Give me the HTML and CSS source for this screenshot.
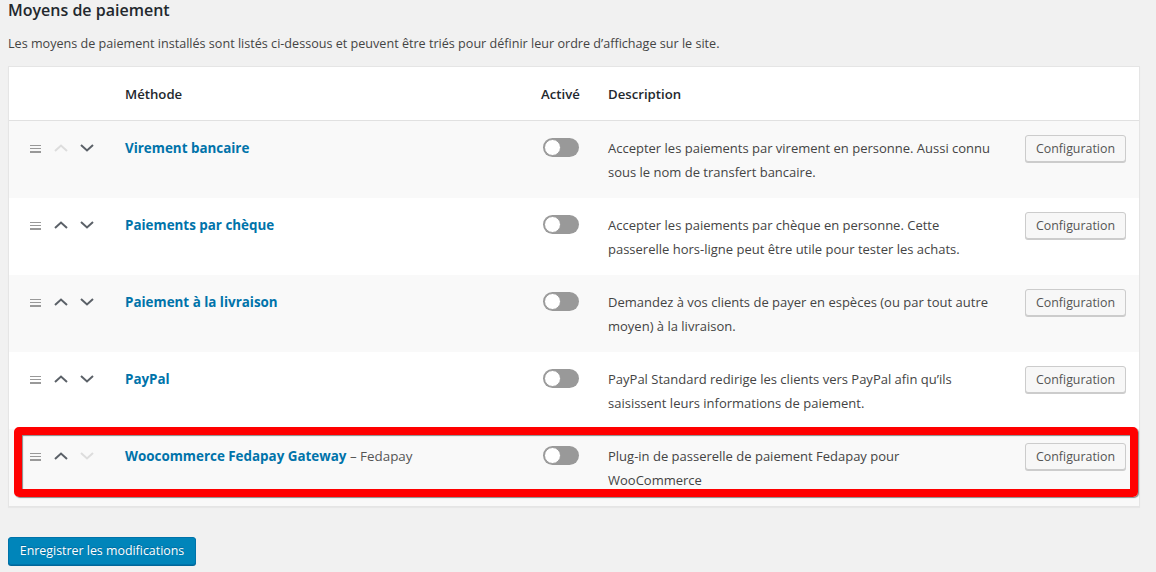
FILE: index.html
```html
<!DOCTYPE html>
<html lang="fr">
<head>
<meta charset="utf-8">
<title>Moyens de paiement</title>
<link rel="stylesheet" href="styles.css">
</head>
<body>
<div class="wrap">
  <h2 class="title">Moyens de paiement</h2>
  <p class="intro">Les moyens de paiement installés sont listés ci-dessous et peuvent être triés pour définir leur ordre d’affichage sur le site.</p>

  <div class="table-box">
    <table class="gateways">
      <colgroup>
        <col class="c-sort"><col class="c-name"><col class="c-status"><col class="c-desc"><col class="c-action">
      </colgroup>
      <thead>
        <tr>
          <th></th>
          <th>Méthode</th>
          <th>Activé</th>
          <th>Description</th>
          <th></th>
        </tr>
      </thead>
      <tbody>
        <tr class="alt">
          <td class="sort">
            <span class="handle"><i></i><i></i><i></i></span>
            <svg class="chev off" viewBox="0 0 16 10"><polyline points="2,8 8,2.5 14,8"/></svg>
            <svg class="chev" viewBox="0 0 16 10"><polyline points="2,2 8,7.5 14,2"/></svg>
          </td>
          <td class="name"><a href="#">Virement bancaire</a></td>
          <td class="status"><span class="toggle"><span class="knob"></span></span></td>
          <td class="desc">Accepter les paiements par virement en personne. Aussi connu sous le nom de transfert bancaire.</td>
          <td class="action"><button class="btn">Configuration</button></td>
        </tr>
        <tr>
          <td class="sort">
            <span class="handle"><i></i><i></i><i></i></span>
            <svg class="chev" viewBox="0 0 16 10"><polyline points="2,8 8,2.5 14,8"/></svg>
            <svg class="chev" viewBox="0 0 16 10"><polyline points="2,2 8,7.5 14,2"/></svg>
          </td>
          <td class="name"><a href="#">Paiements par chèque</a></td>
          <td class="status"><span class="toggle"><span class="knob"></span></span></td>
          <td class="desc">Accepter les paiements par chèque en personne. Cette passerelle hors-ligne peut être utile pour tester les achats.</td>
          <td class="action"><button class="btn">Configuration</button></td>
        </tr>
        <tr class="alt">
          <td class="sort">
            <span class="handle"><i></i><i></i><i></i></span>
            <svg class="chev" viewBox="0 0 16 10"><polyline points="2,8 8,2.5 14,8"/></svg>
            <svg class="chev" viewBox="0 0 16 10"><polyline points="2,2 8,7.5 14,2"/></svg>
          </td>
          <td class="name"><a href="#">Paiement à la livraison</a></td>
          <td class="status"><span class="toggle"><span class="knob"></span></span></td>
          <td class="desc">Demandez à vos clients de payer en espèces (ou par tout autre moyen) à la livraison.</td>
          <td class="action"><button class="btn">Configuration</button></td>
        </tr>
        <tr>
          <td class="sort">
            <span class="handle"><i></i><i></i><i></i></span>
            <svg class="chev" viewBox="0 0 16 10"><polyline points="2,8 8,2.5 14,8"/></svg>
            <svg class="chev" viewBox="0 0 16 10"><polyline points="2,2 8,7.5 14,2"/></svg>
          </td>
          <td class="name"><a href="#">PayPal</a></td>
          <td class="status"><span class="toggle"><span class="knob"></span></span></td>
          <td class="desc">PayPal Standard redirige les clients vers PayPal afin qu’ils saisissent leurs informations de paiement.</td>
          <td class="action"><button class="btn">Configuration</button></td>
        </tr>
        <tr class="alt highlighted">
          <td class="sort">
            <span class="mark"></span>
            <span class="handle"><i></i><i></i><i></i></span>
            <svg class="chev" viewBox="0 0 16 10"><polyline points="2,8 8,2.5 14,8"/></svg>
            <svg class="chev off" viewBox="0 0 16 10"><polyline points="2,2 8,7.5 14,2"/></svg>
          </td>
          <td class="name"><a href="#">Woocommerce Fedapay Gateway</a> <span class="sub">– Fedapay</span></td>
          <td class="status"><span class="toggle"><span class="knob"></span></span></td>
          <td class="desc">Plug-in de passerelle de paiement Fedapay pour WooCommerce</td>
          <td class="action"><button class="btn">Configuration</button></td>
        </tr>
      </tbody>
    </table>
  </div>

  <button class="btn-primary">Enregistrer les modifications</button>
</div>
</body>
</html>
```

FILE: styles.css
```css
* { box-sizing: border-box; }
html, body { margin: 0; padding: 0; }
body {
  background: #f1f1f1;
  font-family: "Open Sans", "Noto Sans", sans-serif;
  font-size: 13px;
  color: #444;
  width: 1156px;
  height: 572px;
  overflow: hidden;
}
.wrap { padding: 0 16px 0 8px; }
.title {
  margin: 0;
  font-size: 16px;
  line-height: 20px;
  font-weight: 600;
  color: #23282d;
}
.intro {
  margin: 14px 0 0;
  line-height: 20px;
  font-size: 12.6px;
  color: #444;
}
.table-box {
  margin-top: 12px;
  width: 1132px;
  background: #fff;
  border: 1px solid #e5e5e5;
  box-shadow: 0 1px 1px rgba(0,0,0,.04);
}
.gateways {
  width: 100%;
  border-collapse: collapse;
  table-layout: fixed;
}
.c-sort { width: 106px; }
.c-name { width: 416px; }
.c-status { width: 67px; }
.c-desc { width: 405px; }
.c-action { width: auto; }

.gateways th {
  text-align: left;
  font-weight: 600;
  font-size: 13.2px;
  color: #23282d;
  padding: 15px 10px 14px;
  line-height: 24px;
  border-bottom: 1px solid #e1e1e1;
}
.gateways td {
  padding: 15px 10px 14px;
  line-height: 24px;
  vertical-align: top;
  height: 77px;
}
.gateways tr.alt td { background: #f9f9f9; }

.sort { position: relative; padding-left: 21px !important; }
.sort .handle {
  display: inline-flex;
  flex-direction: column;
  justify-content: space-between;
  width: 11px;
  height: 8px;
  vertical-align: middle;
  margin-top: -2px;
  margin-right: 9px;
}
.handle i {
  display: block;
  height: 1.5px;
  background: #999;
}
.chev {
  width: 16px;
  height: 10px;
  vertical-align: middle;
  margin-top: -4px;
  margin-right: 6px;
}
.chev polyline {
  fill: none;
  stroke: #5b6168;
  stroke-width: 2;
}
.chev.off polyline { stroke: #dddddd; }

.name { font-size: 13.4px; }
.name a {
  color: #0073aa;
  font-weight: 700;
  text-decoration: none;
}
.name .sub { color: #555; font-weight: 400; }

.status { padding-left: 12px !important; }
.toggle {
  display: inline-block;
  position: relative;
  width: 36px;
  height: 19px;
  border-radius: 10px;
  background: #999;
  margin-top: 2px;
}
.knob {
  position: absolute;
  left: 1px;
  top: 1px;
  width: 17px;
  height: 17px;
  border-radius: 50%;
  background: #fff;
  border: 1px solid #999;
}

.desc { font-size: 13px; color: #444; }
.action {
  text-align: right;
  padding-top: 14px !important;
  padding-right: 13px !important;
}
.btn {
  display: inline-block;
  font-family: inherit;
  font-size: 12.4px;
  color: #555;
  background: #f7f7f7;
  border: 1px solid #ccc;
  border-radius: 3px;
  box-shadow: 0 1px 0 #ccc;
  height: 27px;
  width: 101px;
  padding: 0 8px;
  line-height: 25px;
  cursor: pointer;
}

.highlighted .mark {
  position: absolute;
  left: 5px;
  top: -2px;
  width: 1124px;
  height: 70px;
  border: 8px solid #ff0000;
  border-radius: 5px;
  box-shadow: 1px 1px 1px rgba(0,0,0,.45), inset 1px 1px 1px rgba(0,0,0,.45);
  pointer-events: none;
}

.btn-primary {
  display: block;
  margin-top: 30px;
  font-family: inherit;
  font-size: 12.4px;
  color: #fff;
  background: #0085ba;
  border: 1px solid #0073aa;
  border-radius: 3px;
  box-shadow: 0 1px 0 #006799;
  height: 28px;
  width: 188px;
  padding: 0 10px;
  line-height: 26px;
  text-shadow: 0 -1px 1px #006799;
}
```
